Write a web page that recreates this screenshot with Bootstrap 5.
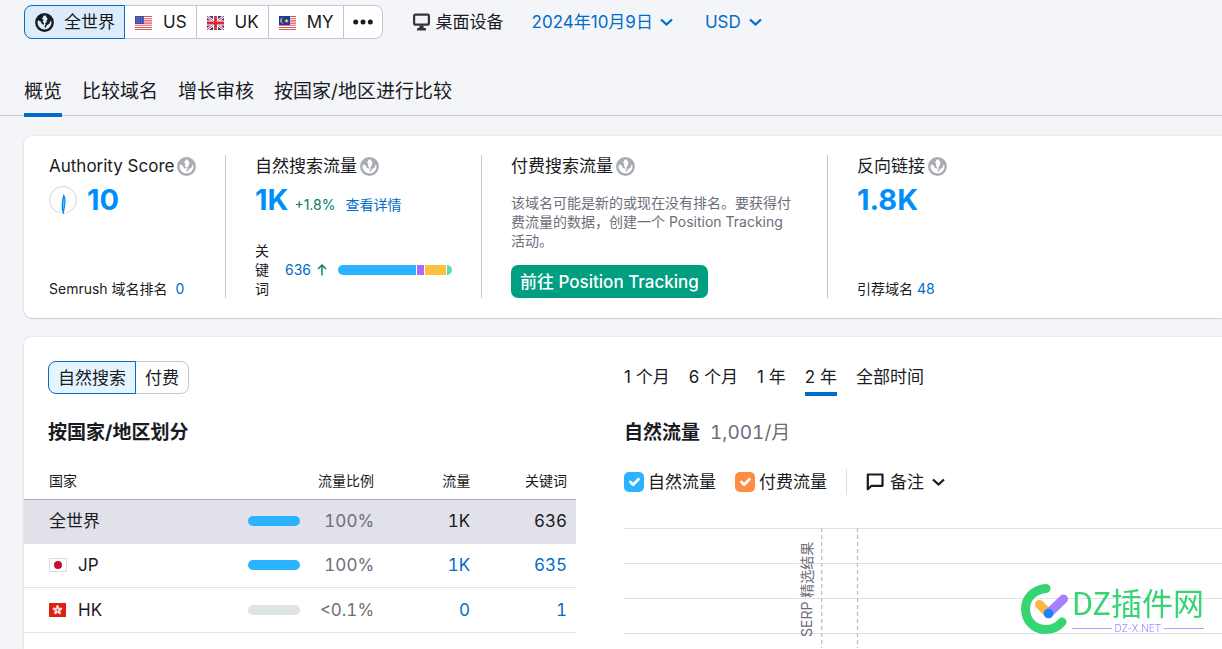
<!DOCTYPE html>
<html lang="zh-CN">
<head>
<meta charset="utf-8">
<meta name="viewport" content="width=device-width, initial-scale=1">
<title>域名概览</title>
<link href="https://cdn.jsdelivr.net/npm/bootstrap@5.3.0/dist/css/bootstrap.min.css" rel="stylesheet">
<style>
  :root { --ink: #191b23; --muted: #6c6e79; --line: #c4c7cf; --blue: #006dca; --bright: #008ff8; --sky: #2bb3ff; }
  body { font-family: Inter, "Noto Sans CJK SC", sans-serif; font-size: 17px; line-height: 24px; color: var(--ink); background: #f4f5f9; }
  a { color: var(--blue); text-decoration: none; }
  svg { display: block; flex: none; }
  .page { padding-left: 24px; }
  .toolbar { padding-top: 5px; }
  .pills .btn { --bs-btn-border-color: var(--line); --bs-btn-color: var(--ink); --bs-btn-bg: #fff; --bs-btn-font-size: 17px; --bs-btn-border-radius: 8px;
    --bs-btn-active-bg: #dcecfa; --bs-btn-active-border-color: var(--blue); --bs-btn-active-color: var(--ink);
    display: flex; align-items: center; padding: 1px 9px 0 10px; height: 34px; flex: none; }
  .pills .flagged { gap: 11px; }
  .pills-sm .btn { height: 33px; padding: 2px 9px 0; --bs-btn-active-bg: #e6f4ff; }
  .plain { border: 0; background: none; padding: 0; color: inherit; display: flex; align-items: center; }
  .tabs { margin-top: 37px; margin-left: -24px; padding-left: 24px; gap: 20px; border-bottom: 1px solid var(--line); font-size: 19px; }
  .tabs a { color: var(--ink); padding: 4px 0 8px; height: 41px; margin-bottom: -2px; border-bottom: 4px solid transparent; }
  .tabs a.active, .periods .active { border-bottom-color: var(--blue); }
  .panel { background: #fff; border-radius: 8px 0 0 8px; box-shadow: 0 0 2px rgba(25,27,35,.18), 0 1px 1px rgba(25,27,35,.12); }
  .metrics { display: grid; grid-template-columns: 101fr 128fr 173fr 197fr; margin-top: 20px; padding: 19px 0 20px; }
  .metric { display: flex; flex-direction: column; min-height: 143px; padding: 0 29px; border-right: 1px solid var(--line); min-width: 0; }
  .metric:first-child { padding-left: 25px; padding-right: 16px; }
  .metric:last-child { border-right: 0; }
  .metric h2 { font-size: 17px; font-weight: 400; line-height: 22px; margin: 0 0 5px; gap: 3px; white-space: nowrap; color: var(--ink); }
  .metric h2 svg { color: #a9abb6; }
  .figure-lg { font-size: 29px; font-weight: 700; line-height: 36px; color: var(--bright); }
  .fine { font-size: 14px; line-height: 19px; }
  .up { color: #007c65; }
  .kw-label { width: 15px; }
  .split { height: 10px; gap: 1px; border-radius: 5px; overflow: hidden; }
  .cta { background: #009f81; color: #fff; font-weight: 500; font-size: 17px; line-height: 24px; height: 33px; padding: 4px 9px; border: 0; border-radius: 7px; white-space: nowrap; }
  .cta:hover { background: #007c65; color: #fff; }
  .details { margin-top: 19px; display: grid; grid-template-columns: 552fr 598fr; column-gap: 48px; border-radius: 8px 0 0 0; }
  .details h3 { font-size: 19px; font-weight: 700; line-height: 24px; margin: 0; }
  .left-head { padding: 24px 24px 0; }
  .geo { --bs-table-bg: transparent; color: var(--ink); margin: 15px 0 0; table-layout: fixed; font-variant-numeric: tabular-nums; }
  .geo th, .geo td { padding: 10px 12px 10px; border-bottom: 1px solid #e0e4e6; line-height: 24px; color: inherit; box-shadow: none; }
  .geo thead th { font-size: 14px; font-weight: 400; line-height: 19px; border-bottom-color: #a9abb6; padding: 11px 12px 9px; }
  .geo tr > :first-child { padding-left: 25px; font-weight: 400; }
  .geo tr > :last-child { padding-right: 9px; }
  .geo .current > * { background: #e0e1e9; border-bottom-color: #e0e1e9; padding-top: 9px; }
  .geo .jp > * { padding-top: 9px; }
  .meter { width: 52px; height: 10px; border-radius: 5px; background: #dee3e6; overflow: hidden; }
  .meter span { display: block; height: 100%; background: var(--sky); }
  .periods { padding-top: 28px; gap: 19px; }
  .periods button { color: var(--ink); height: 31px; align-items: flex-start; border-bottom: 4px solid transparent; white-space: nowrap; }
  .volume { color: var(--muted); font-size: 19px; margin-left: 10px; font-variant-numeric: tabular-nums; }
  .legend-row { margin-top: 24px; height: 26px; }
  .legend-row .form-check-input { width: 20px; height: 20px; margin: 0; border: 0; border-radius: 5px; background-size: 18px; }
  .legend-row .form-check-input:checked { background-color: var(--sky); }
  .legend-row .paid:checked { background-color: #ff8c43; }
  .legend-row label { margin: 0 19px 0 4px; }
  .chart { margin-top: 33px; min-height: 120px; }
  .chart svg { width: 100%; height: 120px; }
  .brand { position: fixed; right: 18px; bottom: 15px; z-index: 5; }
  .brand-name { color: #36d573; font-family: "Noto Sans CJK SC", sans-serif; font-weight: 400; font-size: 31px; line-height: 40px; }
  .brand-sub { color: #a581ff; font-family: Inter, sans-serif; font-weight: 300; font-size: 10px; line-height: 12px; gap: 3px; }
  .brand-sub::before, .brand-sub::after { content: ""; height: 1px; flex: 1; background: #b79cff; }
</style>
</head>
<body>
<svg width="0" height="0" class="position-absolute" aria-hidden="true">
  <symbol id="globe" viewBox="0 0 19 19">
    <circle cx="9.500" cy="9.500" r="8.200" fill="none" stroke="currentColor" stroke-width="2.400"/>
    <path fill="currentColor" d="M1.500 7 4.500 2.500 8.500 2 8.200 4.200 6.800 5.600 8.700 6.900 7.600 8.500 9 10 8.700 12 6.600 10.600 5.400 8.300 3.200 7.400z"/>
    <path fill="currentColor" d="m11 3.600 1.500-1.800 3.700 2.700 1.500 4-2.300-.4-.9 2.500-2.600 1.600-1.500 2.700-1.100-1.700 1.300-1.600-.4-1.600 1.900-1.200-.8-1.300 1.500-1.300z"/>
  </symbol>
  <symbol id="chevron" viewBox="0 0 13 9"><path d="m1 1.500 5.500 5 5.500-5" fill="none" stroke="currentColor" stroke-width="2.300"/></symbol>
</svg>
<div class="page d-flex flex-column min-vh-100">
  <header class="toolbar d-flex align-items-center">
    <div class="btn-group pills" role="group" aria-label="国家/地区">
      <button type="button" class="btn active" style="gap:10px"><svg width="19" height="19"><use href="#globe"/></svg>全世界</button>
      <button type="button" class="btn flagged">
        <svg width="17" height="14" viewBox="0 0 17 14"><path fill="#fff" d="M0 0h17v14H0z"/><path stroke="#e0535c" stroke-width="1.100" d="M0 .5h17M0 2.700h17M0 4.900h17M0 7.100h17M0 9.300h17M0 11.500h17M0 13.500h17"/><path fill="#3f48a5" d="M0 0h9v8H0z"/><path stroke="#a9addb" stroke-width=".7" stroke-dasharray=".7 1" d="M1 1.500h8M1 3.200h8M1 4.900h8M1 6.600h8"/></svg>US</button>
      <button type="button" class="btn flagged">
        <svg width="17" height="14" viewBox="0 0 17 14"><path fill="#293e91" d="M0 0h17v14H0z"/><path stroke="#fff" stroke-width="2.600" d="m0 0 17 14M17 0 0 14"/><path stroke="#dc2737" stroke-width="1" d="m0 0 17 14M17 0 0 14"/><path stroke="#fff" stroke-width="5" d="M8.500 0v14M0 7h17"/><path stroke="#dc2737" stroke-width="2.800" d="M8.500 0v14M0 7h17"/></svg>UK</button>
      <button type="button" class="btn flagged">
        <svg width="17" height="14" viewBox="0 0 17 14"><path fill="#fff" d="M0 0h17v14H0z"/><path stroke="#e0535c" stroke-width="1.100" d="M0 .5h17M0 2.700h17M0 4.900h17M0 7.100h17M0 9.300h17M0 11.500h17M0 13.500h17"/><path fill="#173aa0" d="M0 0h11v9H0z"/><path fill="#fc3" d="M5.400 1.600a3.100 3.100 0 1 0 0 5.800 2.400 2.400 0 1 1 0-5.800z"/><path fill="#fc3" d="m7.600 2.600.5 1.300 1.300-.5-.6 1.200 1 .8-1.300.2-.3 1.300-.9-1-1.200.6.2-1.200-1-.8 1.300-.2z"/></svg>MY</button>
      <button type="button" class="btn" aria-label="更多" style="padding:0 9px"><svg width="20" height="6" viewBox="0 0 20 6" fill="currentColor"><circle cx="2.700" cy="3" r="2.500"/><circle cx="10" cy="3" r="2.500"/><circle cx="17.300" cy="3" r="2.500"/></svg></button>
    </div>
    <button type="button" class="plain" style="margin-left:30px;gap:6px">
      <svg width="17" height="18" viewBox="0 0 17 18"><rect x="1.100" y="1.600" width="14.800" height="10" rx="1.200" fill="none" stroke="#33343c" stroke-width="2.200"/><path fill="#33343c" d="M6.500 12.500h4v2l2.500 1v2H4v-2l2.500-1z"/></svg>桌面设备</button>
    <a href="#" class="d-flex align-items-center" style="margin-left:28px;gap:7px">2024年10月9日<svg width="13" height="9"><use href="#chevron"/></svg></a>
    <a href="#" class="d-flex align-items-center" style="margin-left:32px;gap:8px">USD<svg width="13" height="9"><use href="#chevron"/></svg></a>
  </header>

  <nav class="tabs d-flex">
    <a href="#" class="active" aria-current="page">概览</a>
    <a href="#">比较域名</a>
    <a href="#">增长审核</a>
    <a href="#">按国家/地区进行比较</a>
  </nav>

  <section class="panel metrics">
    <div class="metric">
      <h2 class="d-flex align-items-center">Authority Score<svg width="19" height="19"><use href="#globe"/></svg></h2>
      <div class="d-flex align-items-center" style="gap:10px">
        <svg width="28" height="28" viewBox="0 0 28 28"><circle cx="14" cy="14" r="13.300" fill="#fff" stroke="#e0e1e9" stroke-width="1.300"/><path d="M14.800 9.500c1.300 2 1.300 9-.5 17.300-1.500-4-1.300-12.300.5-17.300z" fill="#59b8fc" stroke="#008ff8" stroke-width="1.300"/></svg>
        <span class="figure-lg">10</span>
      </div>
      <div class="fine mt-auto text-nowrap">Semrush 域名排名 <a href="#" class="ms-1">0</a></div>
    </div>
    <div class="metric">
      <h2 class="d-flex align-items-center">自然搜索流量<svg width="19" height="19"><use href="#globe"/></svg></h2>
      <div class="d-flex align-items-baseline text-nowrap">
        <span class="figure-lg">1K</span><span class="fine up" style="margin-left:6px">+1.8%</span><a href="#" class="fine" style="margin-left:10px">查看详情</a>
      </div>
      <div class="fine d-flex align-items-center mt-auto">
        <span class="kw-label flex-shrink-0">关键词</span>
        <a href="#" style="margin-left:15px">636</a>
        <svg class="up" width="10" height="12" viewBox="0 0 10 12" style="margin:0 11px 0 6px"><path d="M5 11.500V1M1 5l4-4 4 4" fill="none" stroke="currentColor" stroke-width="1.400"/></svg>
        <div class="split d-flex flex-grow-1">
          <span style="flex:79;background:#2bb3ff"></span><span style="flex:7;background:#ab6cfe"></span><span style="flex:21;background:#fdc23c"></span><span style="flex:5;background:#59ddaa"></span>
        </div>
      </div>
    </div>
    <div class="metric">
      <h2 class="d-flex align-items-center">付费搜索流量<svg width="19" height="19"><use href="#globe"/></svg></h2>
      <p class="fine mb-auto" style="margin-top:11px;color:var(--muted)">该域名可能是新的或现在没有排名。要获得付费流量的数据，创建一个 Position Tracking 活动。</p>
      <div><button type="button" class="cta">前往 Position Tracking</button></div>
    </div>
    <div class="metric">
      <h2 class="d-flex align-items-center">反向链接<svg width="19" height="19"><use href="#globe"/></svg></h2>
      <div class="figure-lg">1.8K</div>
      <div class="fine mt-auto">引荐域名 <a href="#">48</a></div>
    </div>
  </section>

  <section class="panel details flex-grow-1">
    <div>
      <div class="left-head">
        <div class="btn-group pills pills-sm" role="group" aria-label="流量类型">
          <button type="button" class="btn active">自然搜索</button>
          <button type="button" class="btn">付费</button>
        </div>
        <h3 style="margin-top:27px">按国家/地区划分</h3>
      </div>
      <table class="table geo">
        <colgroup><col style="width:38.400%"><col style="width:27.200%"><col style="width:17.400%"><col style="width:17%"></colgroup>
        <thead><tr><th scope="col">国家</th><th scope="col" class="text-end">流量比例</th><th scope="col" class="text-end">流量</th><th scope="col" class="text-end">关键词</th></tr></thead>
        <tbody>
          <tr class="current"><th scope="row">全世界</th><td><div class="d-flex align-items-center justify-content-between"><div class="meter"><span style="width:100%"></span></div><span style="color:var(--muted)">100%</span></div></td><td class="text-end">1K</td><td class="text-end">636</td></tr>
          <tr class="jp"><th scope="row"><div class="d-flex align-items-center" style="gap:11px"><svg width="18" height="14" viewBox="0 0 18 14"><path fill="#fff" stroke="#d9dadd" d="M.5.500h17v13H.5z"/><circle cx="9" cy="7" r="4" fill="#c3102e"/></svg>JP</div></th><td><div class="d-flex align-items-center justify-content-between"><div class="meter"><span style="width:100%"></span></div><span style="color:var(--muted)">100%</span></div></td><td class="text-end"><a href="#">1K</a></td><td class="text-end"><a href="#">635</a></td></tr>
          <tr><th scope="row"><div class="d-flex align-items-center" style="gap:12px"><svg width="17" height="14" viewBox="0 0 17 14"><path fill="#de2110" d="M0 0h17v14H0z"/><g fill="#fbdcd9"><ellipse id="petal" cx="8.500" cy="4.300" rx="1.500" ry="2.300"/><use href="#petal" transform="rotate(72 8.500 7)"/><use href="#petal" transform="rotate(144 8.500 7)"/><use href="#petal" transform="rotate(216 8.500 7)"/><use href="#petal" transform="rotate(288 8.500 7)"/></g><circle cx="8.500" cy="7" r=".8" fill="#de2110"/></svg>HK</div></th><td><div class="d-flex align-items-center justify-content-between"><div class="meter"></div><span style="color:var(--muted)">&lt;0.1%</span></div></td><td class="text-end"><a href="#">0</a></td><td class="text-end"><a href="#">1</a></td></tr>
        </tbody>
      </table>
    </div>

    <div>
      <div class="periods d-flex">
        <button type="button" class="plain">1 个月</button>
        <button type="button" class="plain">6 个月</button>
        <button type="button" class="plain">1 年</button>
        <button type="button" class="plain active">2 年</button>
        <button type="button" class="plain">全部时间</button>
      </div>
      <div class="d-flex align-items-baseline" style="margin-top:25px"><h3>自然流量</h3><span class="volume">1,001/月</span></div>
      <div class="legend-row d-flex align-items-center">
        <input class="form-check-input" type="checkbox" id="organic" checked><label for="organic">自然流量</label>
        <input class="form-check-input paid" type="checkbox" id="paid" checked><label for="paid">付费流量</label>
        <div class="vr" style="color:#6c6e79"></div>
        <button type="button" class="plain" style="margin-left:19px;gap:6px">
          <svg width="18" height="18" viewBox="0 0 18 18"><path d="M1.800 16.200V1.500h14.700v11.300H5.500z" fill="none" stroke="currentColor" stroke-width="2.200" stroke-linejoin="round"/></svg>备注<svg width="13" height="9" style="margin-left:2px"><use href="#chevron"/></svg></button>
      </div>
      <div class="chart">
        <svg role="img" aria-label="自然流量图表">
          <g stroke="#e0e1e9" shape-rendering="crispEdges"><path d="M0 .5h2400M0 35.500h2400M0 70.500h2400M0 105.500h2400"/></g>
          <g stroke="#b9bcc2" stroke-dasharray="4 3" stroke-width="1.200"><path d="M197.700 0v124M233.500 0v124"/></g>
          <text transform="translate(188 109) rotate(-90)" font-size="14" fill="#6c6e79">SERP 精选结果</text>
        </svg>
      </div>
    </div>
  </section>
</div>

<div class="brand d-flex align-items-end" style="gap:3px">
  <svg width="48" height="50" viewBox="0 0 48 50" fill="none" stroke-linecap="round">
    <path d="M25 4.500C12.500 5.500 4.500 14.500 4.500 25c0 12 9 20.500 20 20.500 7 0 12.500-2.500 16.500-7.500" stroke="#36d573" stroke-width="9"/>
    <path d="m18.500 20.500 9 9" stroke="#fdb73f" stroke-width="9"/>
    <path d="M27.500 29.500 42.500 15" stroke="#a581ff" stroke-width="9"/>
    <circle cx="27.500" cy="29.500" r="4.800" fill="#1684fc"/>
  </svg>
  <div>
    <div class="brand-name">DZ插件网</div>
    <div class="brand-sub d-flex align-items-center">DZ-X.NET</div>
  </div>
</div>
<script src="https://cdn.jsdelivr.net/npm/bootstrap@5.3.0/dist/js/bootstrap.bundle.min.js"></script>
</body>
</html>
